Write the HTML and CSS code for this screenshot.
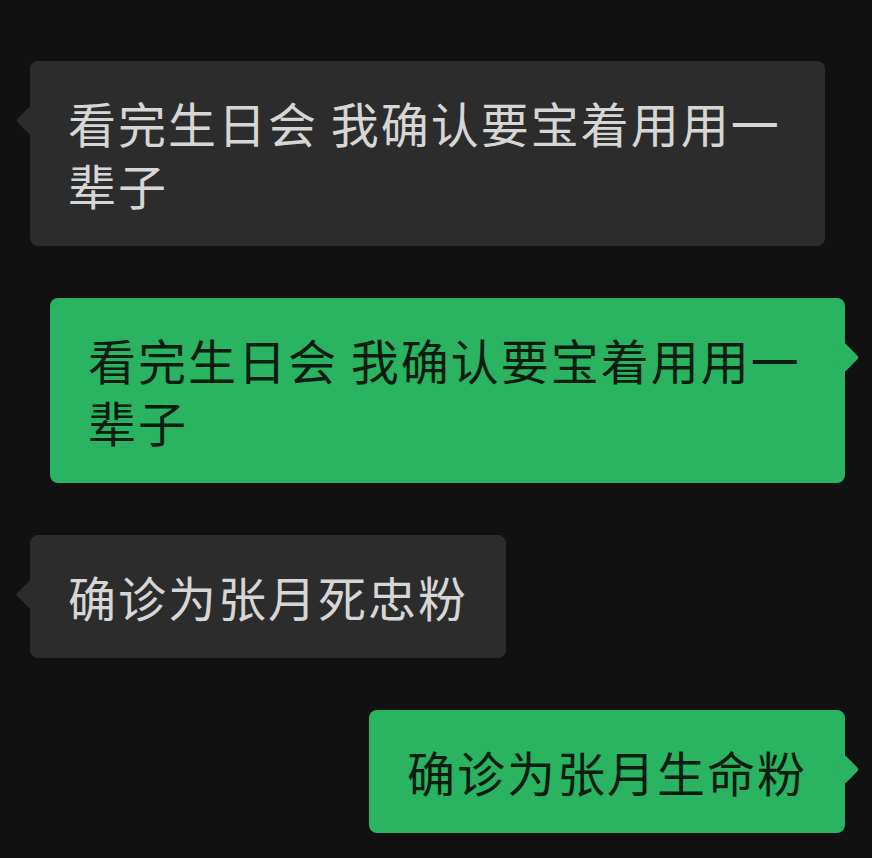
FILE: index.html
```html
<!DOCTYPE html>
<html lang="zh-CN">
<head>
    <meta charset="UTF-8">
    <meta name="viewport" content="width=device-width, initial-scale=1.0">
    <title>聊天</title>
    <link rel="stylesheet" href="styles.css">
</head>
<body>

    <div class="chat">
        <div class="msg msg-in">
            <div class="bubble">看完生日会 我确认要宝着用用一辈子</div>
        </div>
        <div class="msg msg-out">
            <div class="bubble">看完生日会 我确认要宝着用用一辈子</div>
        </div>
        <div class="msg msg-in">
            <div class="bubble">确诊为张月死忠粉</div>
        </div>
        <div class="msg msg-out">
            <div class="bubble">确诊为张月生命粉</div>
        </div>
    </div>

</body>
</html>
```

FILE: styles.css
```css
body {
    margin: 0;
    padding: 0;
    background-color: #111111;
    font-family: "Noto Sans CJK SC", "Noto Sans", sans-serif;
}

.chat {
    display: flex;
    flex-direction: column;
    gap: 52px;
    padding: 61px 27px 40px 30px;
}

.msg {
    display: flex;
}

.msg-in {
    justify-content: flex-start;
}

.msg-out {
    justify-content: flex-end;
}

.bubble {
    position: relative;
    box-sizing: border-box;
    max-width: 795px;
    padding: 30px 38px 31px;
    border-radius: 8px;
    font-size: 48px;
    letter-spacing: 2px;
    line-height: 62px;
}

/* little tail next to the bubble */
.bubble::before {
    content: "";
    position: absolute;
    top: 49px;
    width: 21px;
    height: 21px;
    border-radius: 3px;
    transform: rotate(45deg);
}

.msg-in .bubble {
    background: #2c2c2c;
    color: #d6d6d6;
}

.msg-in .bubble::before {
    left: -10px;
    background: #2c2c2c;
}

.msg-out .bubble {
    background: #2ab360;
    color: #0b1d10;
}

.msg-out .bubble::before {
    right: -10px;
    background: #2ab360;
}
```
